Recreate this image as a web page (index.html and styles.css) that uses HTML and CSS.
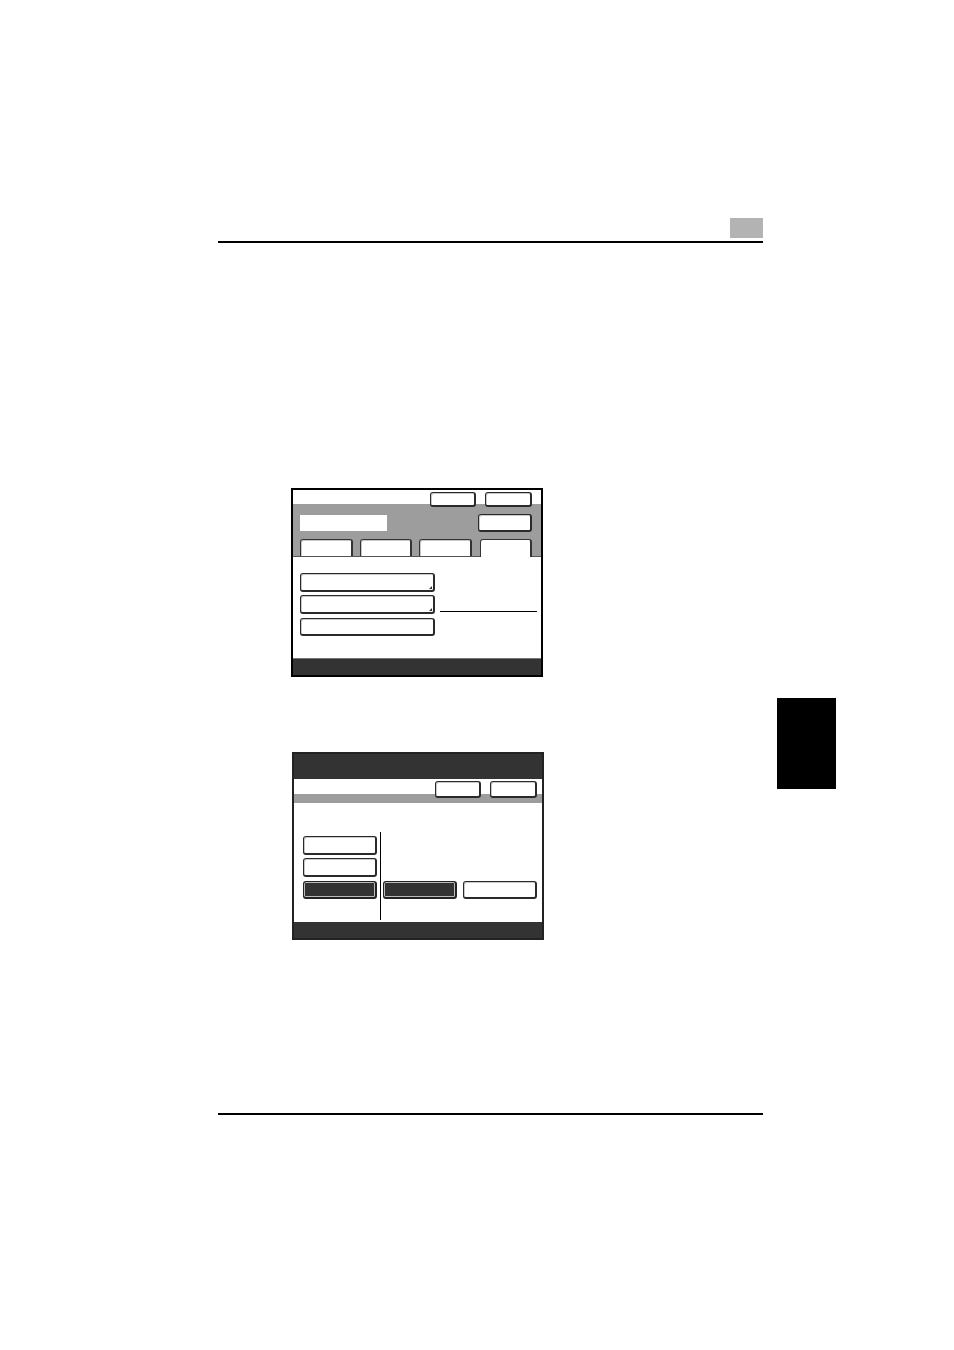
FILE: index.html
```html
<!DOCTYPE html>
<html>
<head>
<meta charset="utf-8">
<link rel="stylesheet" href="styles.css">
</head>
<body>
<div class="page">
  <div class="hdr"><div class="hdr-box"></div></div>

  <div class="s1">
    <div class="s1-top">
      <div class="row1">
        <div class="btn b46"></div>
        <div class="btn b47"></div>
      </div>
      <div class="row2">
        <div class="field"></div>
        <div class="btn b54"></div>
      </div>
      <div class="tabs">
        <div class="tab"></div>
        <div class="tab"></div>
        <div class="tab"></div>
        <div class="tab active"></div>
      </div>
    </div>
    <div class="s1-body">
      <div class="list">
        <div class="btn lbtn corner"></div>
        <div class="btn lbtn corner"></div>
        <div class="btn lbtn gap4"></div>
      </div>
      <div class="hline"></div>
    </div>
    <div class="s1-foot"></div>
  </div>

  <div class="mid">
    <div class="s2">
      <div class="s2-head"></div>
      <div class="s2-top">
        <div class="btn b46 h17"></div>
        <div class="btn b47 h17"></div>
      </div>
      <div class="s2-body">
        <div class="col">
          <div class="btn sbtn"></div>
          <div class="btn sbtn"></div>
          <div class="btn sbtn dark gap4"></div>
        </div>
        <div class="vline"></div>
        <div class="right">
          <div class="btn sbtn dark"></div>
          <div class="btn sbtn"></div>
        </div>
      </div>
      <div class="s2-foot"></div>
    </div>
    <div class="thumb"></div>
  </div>

  <div class="ftr"></div>
</div>
</body>
</html>
```
FILE: styles.css
```css
* { box-sizing: border-box; }
html, body { margin: 0; padding: 0; background: #fff; }
body { font-family: "Liberation Sans", Arial, sans-serif; }
.page { width: 954px; height: 1350px; overflow: hidden; }

.hdr {
  margin: 218px 0 0 218px;
  width: 545px;
  height: 25px;
  display: flex;
  justify-content: flex-end;
  border-bottom: 2px solid #000;
}
.hdr-box { width: 33px; height: 20px; background: #b3b3b3; }

.btn {
  background: #fff;
  border: 1px solid #2a2a2a;
  border-right-width: 2px;
  border-bottom-width: 2px;
  border-radius: 3px;
  box-shadow: inset 1px 1px 0 #c8c8c8;
  flex: none;
}
.b46 { width: 46px; height: 15px; }
.b47 { width: 47px; height: 15px; }
.b54 { width: 54px; height: 18px; margin-left: auto; }
.h17 { height: 17px; }

/* Screen 1 */
.s1 {
  margin: 245px 0 0 291px;
  width: 252px;
  height: 189px;
  border: 2px solid #000;
  display: flex;
  flex-direction: column;
}
.s1-top {
  height: 67px;
  flex: none;
  background: linear-gradient(#fff 0 14px, #9d9d9d 14px calc(100% - 1px), #555 calc(100% - 1px));
  padding: 2px 9px 0 7px;
  display: flex;
  flex-direction: column;
}
.row1 { display: flex; justify-content: flex-end; gap: 9px; }
.row2 { display: flex; align-items: flex-start; margin-top: 7px; }
.field { width: 87px; height: 16px; background: #fff; margin-top: 1px; }
.tabs { display: flex; gap: 7px; margin-top: 7px; align-items: flex-start; }
.tab {
  width: 53px;
  height: 17px;
  background: #fff;
  border: 1px solid #333;
  border-bottom: none;
  border-right-width: 2px;
  border-radius: 3px 3px 0 0;
  box-shadow: inset 1px 1px 0 #c8c8c8;
}
.tab.active { height: 18px; width: 53px; margin-left: 1px; box-shadow: none; }

.s1-body {
  flex: 1;
  background: #fff;
  padding: 16px 0 0 7px;
  display: flex;
  align-items: flex-start;
}
.list { display: flex; flex-direction: column; gap: 3px; }
.lbtn { width: 135px; height: 19px; position: relative; }
.lbtn.gap4 { margin-top: 1px; height: 18px; }
.corner::after {
  content: "";
  position: absolute;
  right: 1px;
  bottom: 1px;
  width: 0;
  height: 0;
  border-left: 3px solid transparent;
  border-bottom: 3px solid #333;
}
.hline { width: 97px; height: 1px; background: #000; margin: 38px 0 0 5px; }
.s1-foot { height: 17px; flex: none; background: #333; border-top: 1px solid #777; }

/* middle: screen 2 + thumb tab */
.mid { display: flex; align-items: flex-start; margin-top: 21px; height: 242px; }
.s2 {
  margin: 54px 0 0 292px;
  width: 252px;
  height: 188px;
  border: 2px solid #222;
  display: flex;
  flex-direction: column;
  flex: none;
}
.s2-head { height: 25px; flex: none; background: #333; }
.s2-top {
  height: 24px;
  flex: none;
  background: linear-gradient(#fff 0 15px, #9d9d9d 15px);
  padding: 2px 5px 0 0;
  display: flex;
  justify-content: flex-end;
  gap: 9px;
}
.s2-body {
  flex: 1;
  background: #fff;
  padding-left: 9px;
  display: flex;
  align-items: flex-start;
}
.col { display: flex; flex-direction: column; gap: 3px; margin-top: 33px; }
.sbtn { width: 74px; height: 19px; }
.sbtn.gap4 { margin-top: 1px; height: 18px; }
.sbtn.dark {
  background: #333;
  border-color: #222;
  box-shadow: inset 0 0 0 1px #bbb;
}
.vline {
  width: 1px;
  height: 88px;
  background: #000;
  margin: 29px 0 0 3px;
  border-top: 2px solid #000;
  box-shadow: 1px 0 0 -0px transparent;
}
.right { display: flex; gap: 6px; margin: 78px 0 0 2px; }
.right .sbtn { height: 18px; }
.s2-foot { height: 16px; flex: none; background: #333; }

.thumb { width: 59px; height: 91px; background: #000; margin-left: 233px; flex: none; }

.ftr { margin: 173px 0 0 218px; width: 545px; height: 2px; background: #000; }
```
